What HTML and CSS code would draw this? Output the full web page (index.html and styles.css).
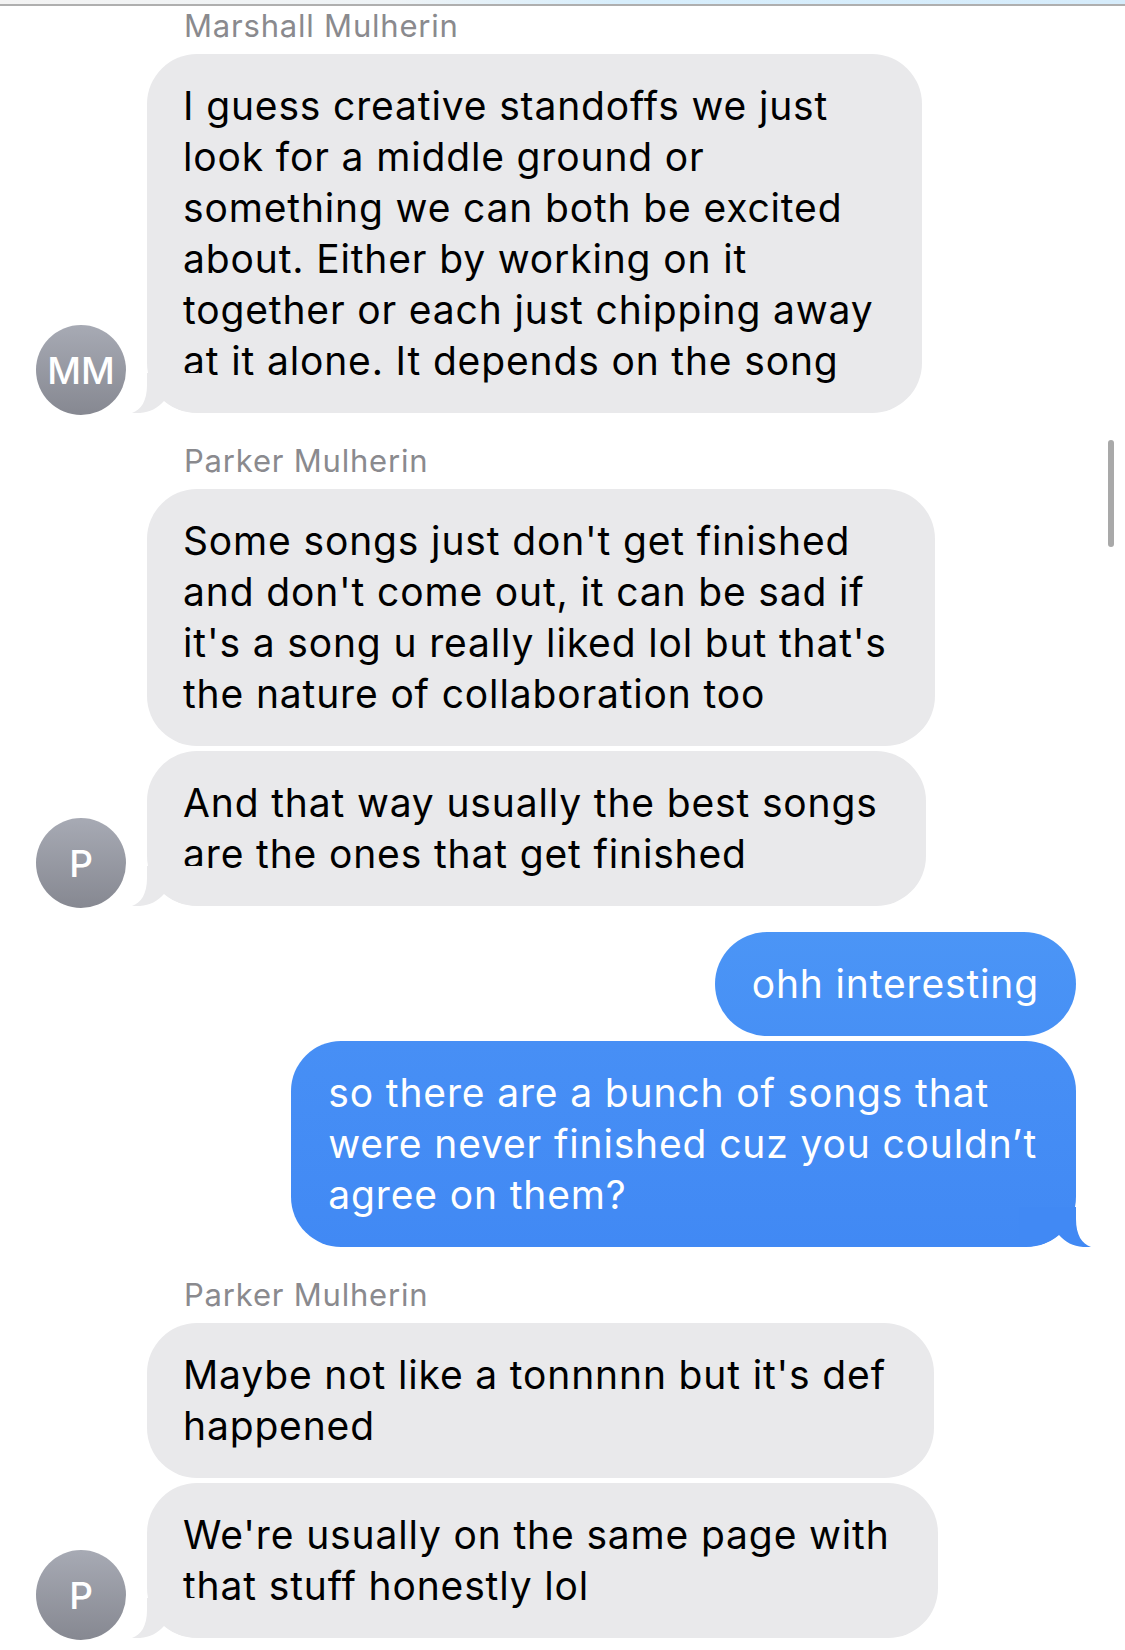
FILE: index.html
```html
<!DOCTYPE html>
<html>
<head>
<meta charset="utf-8">
<link rel="stylesheet" href="styles.css">
</head>
<body>
<div class="topbar"></div>
<div class="thread">
  <div class="group in">
    <div class="avatar">MM</div>
    <div class="col">
      <div class="name first">Marshall Mulherin</div>
      <div class="bubble gray last">I guess creative standoffs we just<br>look for a middle ground or<br>something we can both be excited<br>about. Either by working on it<br>together or each just chipping away<br>at it alone. It depends on the song<span class="tail"><svg width="72" height="40" viewBox="0 0 72 40"><path d="M15,0 L15,12 C15,28 9,37 0,40 C14,41 24,37 32,28 C42,37 56,40 72,40 L72,0 Z" fill="#e9e9eb"/></svg></span></div>
    </div>
  </div>

  <div class="group in">
    <div class="avatar">P</div>
    <div class="col">
      <div class="name">Parker Mulherin</div>
      <div class="bubble gray">Some songs just don't get finished<br>and don't come out, it can be sad if<br>it's a song u really liked lol but that's<br>the nature of collaboration too</div>
      <div class="bubble gray last">And that way usually the best songs<br>are the ones that get finished<span class="tail"><svg width="72" height="40" viewBox="0 0 72 40"><path d="M15,0 L15,12 C15,28 9,37 0,40 C14,41 24,37 32,28 C42,37 56,40 72,40 L72,0 Z" fill="#e9e9eb"/></svg></span></div>
    </div>
  </div>

  <div class="group out">
    <div class="bubble blue b1">ohh interesting</div>
    <div class="bubble blue b2 last">so there are a bunch of songs that<br>were never finished cuz you couldn’t<br>agree on them?<span class="tail right"><svg width="72" height="40" viewBox="0 0 72 40"><path d="M15,0 L15,12 C15,28 9,37 0,40 C14,41 24,37 32,28 C42,37 56,40 72,40 L72,0 Z" fill="#4189f4"/></svg></span></div>
  </div>

  <div class="group in">
    <div class="avatar">P</div>
    <div class="col">
      <div class="name">Parker Mulherin</div>
      <div class="bubble gray">Maybe not like a tonnnnn but it's def<br>happened</div>
      <div class="bubble gray last">We're usually on the same page with<br>that stuff honestly lol<span class="tail"><svg width="72" height="40" viewBox="0 0 72 40"><path d="M15,0 L15,12 C15,28 9,37 0,40 C14,41 24,37 32,28 C42,37 56,40 72,40 L72,0 Z" fill="#e9e9eb"/></svg></span></div>
    </div>
  </div>
</div>
<div class="scrollbar"></div>
</body>
</html>
```

FILE: styles.css
```css
html, body {
  margin: 0;
  padding: 0;
  background: #ffffff;
}
body {
  width: 1125px;
  height: 1650px;
  overflow: hidden;
  position: relative;
  font-family: "Inter", "Noto Sans", sans-serif;
  -webkit-font-smoothing: antialiased;
}
.topbar {
  height: 4px;
  background: linear-gradient(to right, #f3f3f3 0%, #eef3f6 35%, #d7eefc 55%, #d6ecfb 100%);
  border-bottom: 2px solid #afafaf;
}
.thread {
  display: flex;
  flex-direction: column;
}
.group.in {
  display: flex;
  flex-direction: row;
  align-items: flex-end;
  padding-left: 36px;
}
.group.out {
  display: flex;
  flex-direction: column;
  align-items: flex-end;
  padding-right: 49px;
  margin-top: 26px;
  gap: 5px;
}
.avatar {
  width: 90px;
  height: 90px;
  flex: none;
  border-radius: 50%;
  background: linear-gradient(to bottom, #a7aab4, #868891);
  color: #ffffff;
  font-size: 37px;
  font-weight: 500;
  display: flex;
  align-items: center;
  justify-content: center;
  margin-bottom: -2px;
}
.col {
  display: flex;
  flex-direction: column;
  align-items: flex-start;
  gap: 5px;
  margin-left: 21px;
}
.name {
  font-size: 31px;
  line-height: 36px;
  letter-spacing: 0.8px;
  color: #8a8a8e;
  padding-left: 37px;
  margin-top: 30px;
  margin-bottom: 5px;
}
.name.first {
  margin-top: 2px;
}
.bubble {
  position: relative;
  font-size: 39px;
  line-height: 51px;
  letter-spacing: 0.85px;
  white-space: nowrap;
  border-radius: 50px;
}
.bubble.gray {
  background: #e9e9eb;
  color: #000000;
  padding: 26px 48px 27px 36px;
}
.bubble.blue {
  color: #ffffff;
  padding: 26px 39px 27px 37px;
}
.bubble.b1 {
  background: linear-gradient(to bottom, #4b95f6, #4790f5);
  border-radius: 52px;
  padding-right: 37px;
}
.bubble.b2 {
  background: linear-gradient(to bottom, #478ff5, #4189f4);
}
.tail {
  position: absolute;
  left: -15px;
  bottom: 0;
  width: 72px;
  height: 40px;
  line-height: 0;
}
.tail.right {
  left: auto;
  right: -15px;
  transform: scaleX(-1);
}
.scrollbar {
  position: absolute;
  left: 1108px;
  top: 440px;
  width: 6px;
  height: 107px;
  border-radius: 3px;
  background: #a9a9a9;
}
```
